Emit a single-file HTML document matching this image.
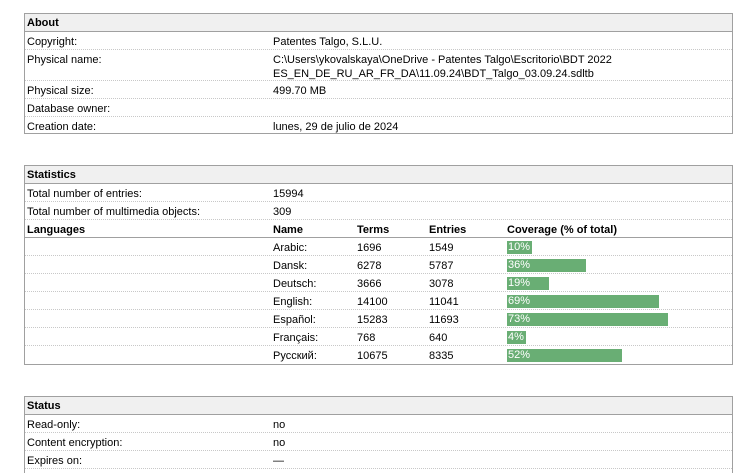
<!DOCTYPE html>
<html style="height:473px;overflow:hidden"><head><meta charset="utf-8"><style>
*{margin:0;padding:0;box-sizing:border-box}
body{width:750px;height:473px;background:#fff;font-family:"Liberation Sans","DejaVu Sans",sans-serif;font-size:11px;color:#000;position:relative;overflow:hidden}
.box{position:absolute;left:24px;width:709px;border:1px solid #a0a0a0}
.h{position:absolute;left:0;right:0;top:0;height:18px;background:#f0f0f0;border-bottom:1px solid #a0a0a0;font-weight:bold;padding-left:2px;line-height:18px}
.r{position:absolute;left:0;right:0;border-bottom:1px dotted #c8c8c8}
.t{position:absolute;white-space:nowrap;line-height:14px}
.b{font-weight:bold}
.bar{position:absolute;left:482px;height:13px;background:#69ae74;color:#fff;line-height:13px;padding-left:1px}
</style></head><body>
<div class="box" style="top:13px;height:121px">
 <div class="h">About</div>
 <div class="r" style="top:18px;height:18px"><span class="t" style="left:2px;top:3px">Copyright:</span><span class="t" style="left:248px;top:3px">Patentes Talgo, S.L.U.</span></div>
 <div class="r" style="top:36px;height:31px"><span class="t" style="left:2px;top:3px">Physical name:</span><span class="t" style="left:248px;top:3px">C:\Users\ykovalskaya\OneDrive - Patentes Talgo\Escritorio\BDT 2022<br>ES_EN_DE_RU_AR_FR_DA\11.09.24\BDT_Talgo_03.09.24.sdltb</span></div>
 <div class="r" style="top:67px;height:18px"><span class="t" style="left:2px;top:3px">Physical size:</span><span class="t" style="left:248px;top:3px">499.70 MB</span></div>
 <div class="r" style="top:85px;height:18px"><span class="t" style="left:2px;top:3px">Database owner:</span></div>
 <div style="position:absolute;top:103px;left:0;right:0;height:18px"><span class="t" style="left:2px;top:3px">Creation date:</span><span class="t" style="left:248px;top:3px">lunes, 29 de julio de 2024</span></div>
</div>

<div class="box" style="top:165px;height:200px">
 <div class="h">Statistics</div>
 <div class="r" style="top:18px;height:18px"><span class="t" style="left:2px;top:3px">Total number of entries:</span><span class="t" style="left:248px;top:3px">15994</span></div>
 <div class="r" style="top:36px;height:18px"><span class="t" style="left:2px;top:3px">Total number of multimedia objects:</span><span class="t" style="left:248px;top:3px">309</span></div>
 <div style="position:absolute;top:54px;left:0;right:0;height:18px;border-bottom:1px solid #a0a0a0" class="b"><span class="t" style="left:2px;top:3px">Languages</span><span class="t" style="left:248px;top:3px">Name</span><span class="t" style="left:332px;top:3px">Terms</span><span class="t" style="left:404px;top:3px">Entries</span><span class="t" style="left:482px;top:3px">Coverage (% of total)</span></div>
 <div class="r" style="top:72px;height:18px"><span class="t" style="left:248px;top:3px">Arabic:</span><span class="t" style="left:332px;top:3px">1696</span><span class="t" style="left:404px;top:3px">1549</span><div class="bar" style="top:3px;width:25px">10%</div></div>
 <div class="r" style="top:90px;height:18px"><span class="t" style="left:248px;top:3px">Dansk:</span><span class="t" style="left:332px;top:3px">6278</span><span class="t" style="left:404px;top:3px">5787</span><div class="bar" style="top:3px;width:79px">36%</div></div>
 <div class="r" style="top:108px;height:18px"><span class="t" style="left:248px;top:3px">Deutsch:</span><span class="t" style="left:332px;top:3px">3666</span><span class="t" style="left:404px;top:3px">3078</span><div class="bar" style="top:3px;width:42px">19%</div></div>
 <div class="r" style="top:126px;height:18px"><span class="t" style="left:248px;top:3px">English:</span><span class="t" style="left:332px;top:3px">14100</span><span class="t" style="left:404px;top:3px">11041</span><div class="bar" style="top:3px;width:152px">69%</div></div>
 <div class="r" style="top:144px;height:18px"><span class="t" style="left:248px;top:3px">Español:</span><span class="t" style="left:332px;top:3px">15283</span><span class="t" style="left:404px;top:3px">11693</span><div class="bar" style="top:3px;width:161px">73%</div></div>
 <div class="r" style="top:162px;height:18px"><span class="t" style="left:248px;top:3px">Français:</span><span class="t" style="left:332px;top:3px">768</span><span class="t" style="left:404px;top:3px">640</span><div class="bar" style="top:3px;width:19px">4%</div></div>
 <div style="position:absolute;left:0;right:0;top:180px;height:18px"><span class="t" style="left:248px;top:3px">Русский:</span><span class="t" style="left:332px;top:3px">10675</span><span class="t" style="left:404px;top:3px">8335</span><div class="bar" style="top:3px;width:115px">52%</div></div>
</div>

<div class="box" style="top:396px;height:90px">
 <div class="h">Status</div>
 <div class="r" style="top:18px;height:18px"><span class="t" style="left:2px;top:3px">Read-only:</span><span class="t" style="left:248px;top:3px">no</span></div>
 <div class="r" style="top:36px;height:18px"><span class="t" style="left:2px;top:3px">Content encryption:</span><span class="t" style="left:248px;top:3px">no</span></div>
 <div class="r" style="top:54px;height:18px"><span class="t" style="left:2px;top:3px">Expires on:</span><span class="t" style="left:248px;top:3px">—</span></div>
</div>
</body></html>
